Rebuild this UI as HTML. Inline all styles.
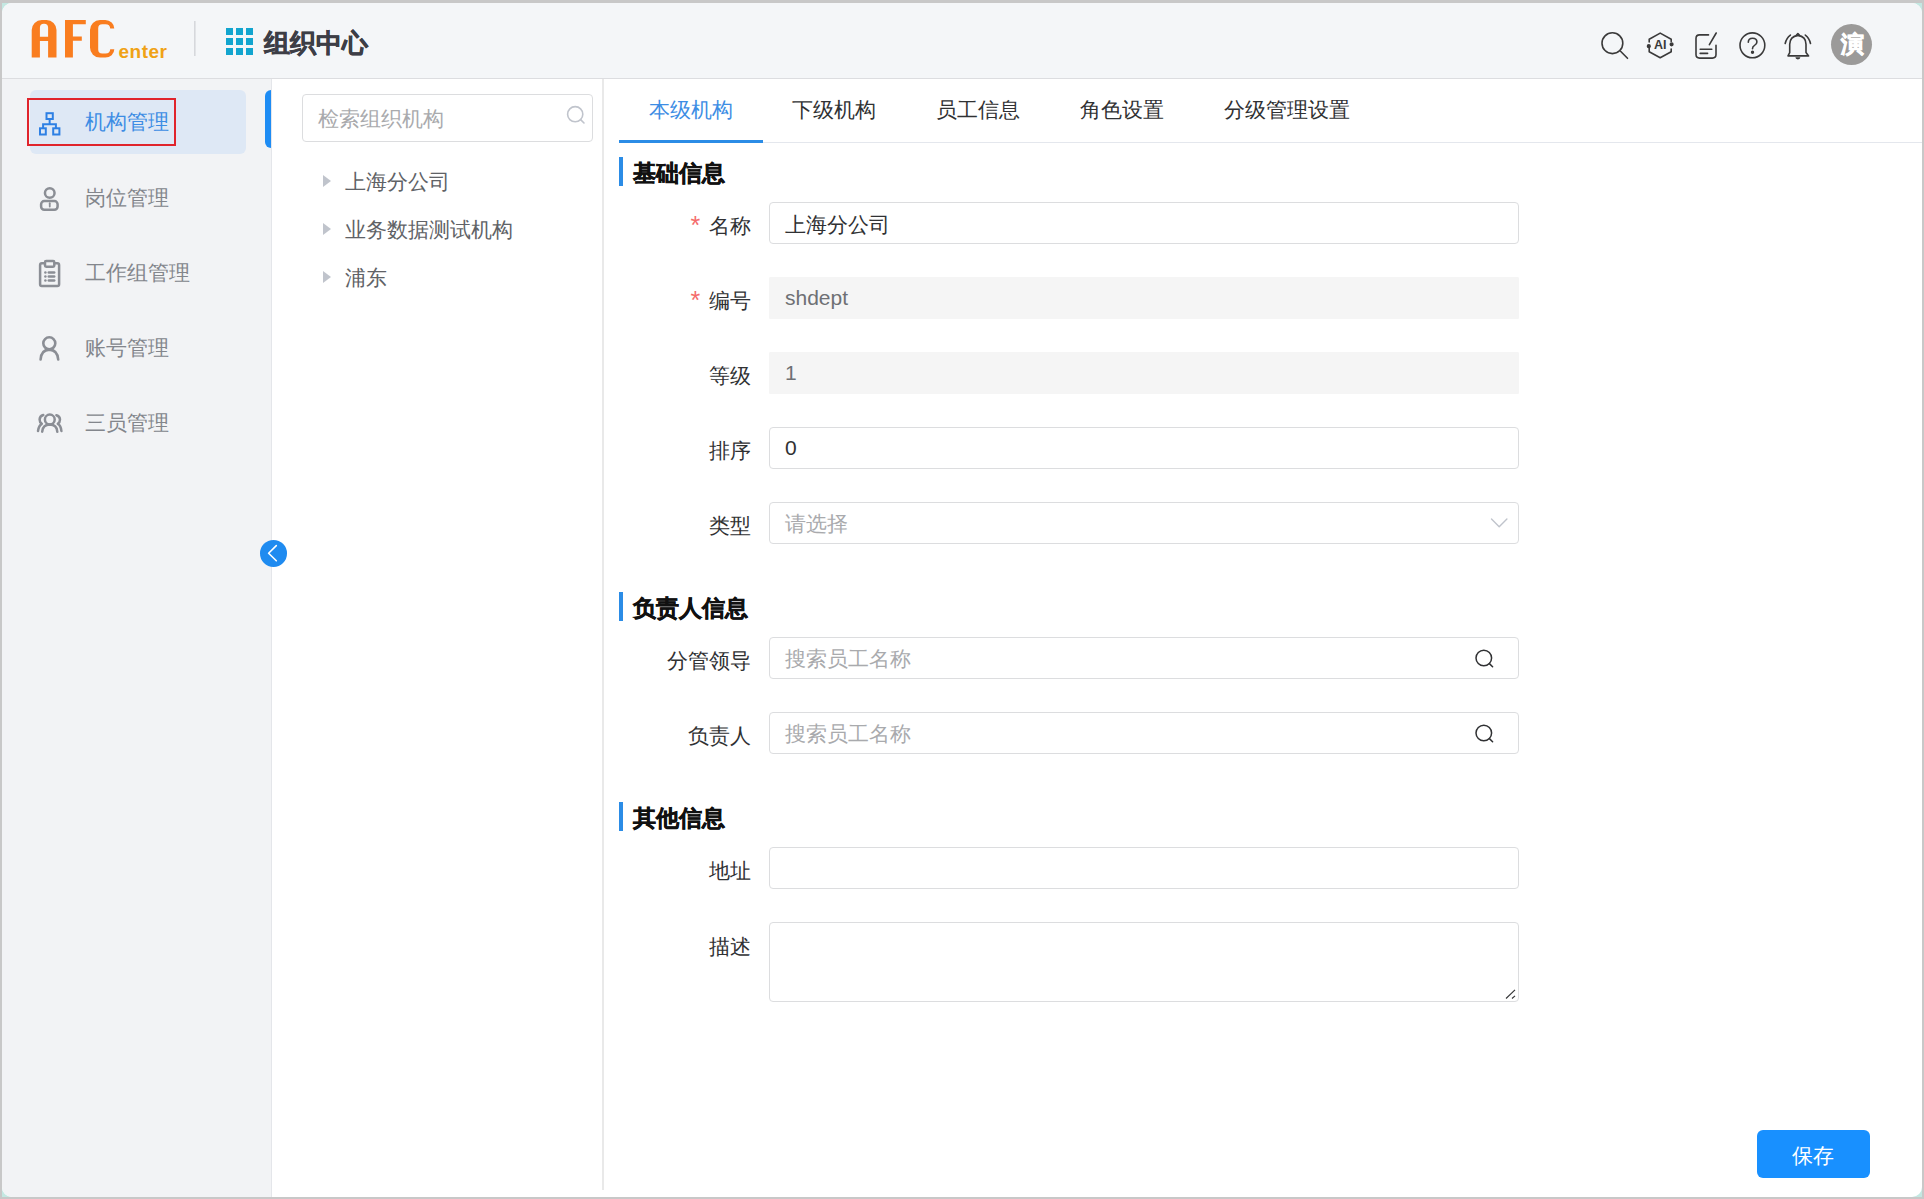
<!DOCTYPE html>
<html><head><meta charset="utf-8">
<style>
*{box-sizing:border-box;margin:0;padding:0}
html,body{width:1924px;height:1199px;overflow:hidden;background:#c8c8c8;font-family:"Liberation Sans",sans-serif}
#teal{position:absolute;left:2px;top:3px;width:1920px;height:1194px;background:#c4e8e2}
#win{position:absolute;left:2px;top:3px;width:1920px;height:1194px;border-radius:10px;overflow:hidden;background:#fff}
#hdr{position:absolute;left:0;top:0;width:1920px;height:76px;background:#f4f6f8;border-bottom:1px solid #dcdde0}
#side{position:absolute;left:0;top:76px;width:270px;height:1118px;background:#f2f3f5;border-right:1px solid #e4e6ea}
#tree{position:absolute;left:270px;top:76px;width:332px;height:1118px;background:#fff}
.t{position:absolute;white-space:nowrap;line-height:1}
.a{position:absolute}
.nav{font-size:21px;color:#83868c;margin-top:-1px}
.inp{position:absolute;left:769px;width:750px;height:41.5px;border:1px solid #dcdddf;border-radius:4px;background:#fff}
.inp.dis{background:#f5f5f5;border-color:#f5f5f5;border-radius:1px}
.lbl{font-size:21px;color:#303133;margin-top:-0.75px}
.req{font-size:25px;color:#f56c6c}
.bar{position:absolute;left:619px;width:4px;height:29px;background:#2b8ce6}
.sec{font-size:23.3px;font-weight:bold;color:#111;-webkit-text-stroke:0.45px #111;margin-top:1.2px;margin-left:1px}
.tab{font-size:21px;color:#303133;margin-top:-1px}
.val{font-size:21px;color:#303133}
.ph{font-size:21px;color:#a9aaad}
.tri{position:absolute;width:0;height:0;border-top:6.5px solid transparent;border-bottom:6.5px solid transparent;border-left:8.5px solid #c0c4cc}
</style></head><body>
<div id="teal"></div>
<div id="win">
  <div id="hdr"></div>
  <div id="side"></div>
  <div id="tree"></div>
</div>

<!-- header: logo -->
<svg class="a" style="left:0;top:0" width="260" height="78" viewBox="0 0 260 78">
  <g fill="#f97d1f" fill-rule="evenodd">
    <path d="M31.7 57.6 V30 A10 10 0 0 1 41.7 20 H46.5 A10 10 0 0 1 56.5 30 V57.6 H48.1 V40.9 H39.9 V57.6 Z M39.9 36.8 H48.1 V27.7 A4 4 0 0 0 44.1 23.7 H43.9 A4 4 0 0 0 39.9 27.7 Z"/>
    <path d="M65 57.6 V20 H85.8 V24.3 H72.9 V36.6 H81.8 V40.8 H72.9 V57.6 Z"/>
    <path d="M114.3 28.6 A9 8.6 0 0 0 105.3 20 H100 A10 10 0 0 0 90 30 V47.6 A10 10 0 0 0 100 57.6 H105.3 A9 8.4 0 0 0 114.3 49.2 H110.2 Q110 53.4 105.5 53.4 H102.2 Q98.2 53.4 98.2 49.4 V28.2 Q98.2 24.2 102.2 24.2 H105.5 Q110 24.2 110.2 28.6 Z"/>
  </g>
  <text x="118.5" y="58" font-family="Liberation Sans" font-weight="bold" font-size="19" fill="#f0a216" textLength="48.5" lengthAdjust="spacing">enter</text>
  <rect x="194" y="21" width="1.6" height="35" fill="#d6d8dc"/>
  <g fill="#12a5cf">
    <rect x="226" y="28" width="7" height="7"/><rect x="236" y="28" width="7" height="7"/><rect x="246" y="28" width="7" height="7"/>
    <rect x="226" y="38" width="7" height="7"/><rect x="236" y="38" width="7" height="7"/><rect x="246" y="38" width="7" height="7"/>
    <rect x="226" y="48" width="7" height="7"/><rect x="236" y="48" width="7" height="7"/><rect x="246" y="48" width="7" height="7"/>
  </g>
</svg>
<div class="t" style="left:264px;top:29.5px;font-size:26.4px;font-weight:bold;color:#3d3e46;-webkit-text-stroke:0.5px #3d3e46">组织中心</div>

<!-- header icons -->
<svg class="a" style="left:1590px;top:20px" width="300" height="50" viewBox="1590 20 300 50" fill="none" stroke="#3a3a3a" stroke-width="1.6" stroke-linecap="round" stroke-linejoin="round">
  <circle cx="1612.4" cy="43.2" r="10.4"/>
  <line x1="1620.3" y1="51" x2="1627.5" y2="58.3"/>
  <path d="M1649.2 42 V39.2 L1660.2 33.1 L1671.2 39.2 V41.5"/>
  <path d="M1671.2 49 V51.8 L1660.2 57.8 L1649.2 51.8 V47.5"/>
  <circle cx="1648.8" cy="46.2" r="1.3" fill="#3a3a3a"/>
  <circle cx="1671.6" cy="44.3" r="1.3" fill="#3a3a3a"/>
  <text x="1660.3" y="49.2" font-family="Liberation Sans" font-weight="bold" font-size="12.5" fill="#3a3a3a" stroke="none" text-anchor="middle">AI</text>
  <path d="M1708.5 34.9 H1699.6 Q1696 34.9 1696 38.5 V54.5 Q1696 58.1 1699.6 58.1 H1712.4 Q1716 58.1 1716 54.5 V45.3"/>
  <line x1="1709.4" y1="44.7" x2="1716.2" y2="33"/>
  <line x1="1700.2" y1="49.3" x2="1711.8" y2="49.3"/>
  <line x1="1700.2" y1="53.4" x2="1707.6" y2="53.4"/>
  <circle cx="1752.4" cy="45.3" r="12.4"/>
  <path d="M1748.3 42.3 Q1748.3 38.2 1752.6 38.2 Q1756.9 38.2 1756.9 42 Q1756.9 44.3 1754.3 45.6 Q1752.5 46.5 1752.5 48.8"/>
  <circle cx="1752.5" cy="52.2" r="0.9" fill="#3a3a3a"/>
  <path d="M1788 55.9 H1808.6 L1806 52.6 V44.2 Q1806 36.6 1797.9 35.4 Q1789.9 36.6 1789.7 44.2 V52.6 Z"/>
  <path d="M1796.3 35.3 L1797.9 33.5 L1799.5 35.3"/>
  <path d="M1795.4 57.3 H1800.4 Q1800.4 59.4 1797.9 59.4 Q1795.4 59.4 1795.4 57.3Z" fill="#3a3a3a" stroke="none"/>
  <path d="M1785.2 43.5 Q1786.3 38.2 1790.4 35.1"/>
  <path d="M1810.5 43.5 Q1809.4 38.2 1805.3 35.1"/>
</svg>
<div class="a" style="left:1831px;top:23.5px;width:41px;height:41px;border-radius:50%;background:#9b9a99"></div>
<div class="t" style="left:1841px;top:34.3px;font-size:22.5px;font-weight:bold;color:#fff;-webkit-text-stroke:0.9px #fff">演</div>

<!-- sidebar -->
<div class="a" style="left:30px;top:90px;width:216px;height:64px;border-radius:6px;background:#dee8f5"></div>
<div class="a" style="left:26.5px;top:97.5px;width:149px;height:48px;border:2px solid #e0242c"></div>
<svg class="a" style="left:30px;top:100px" width="40" height="345" viewBox="30 100 40 345" fill="none" stroke-linecap="round" stroke-linejoin="round">
  <g stroke="#2e80e4" stroke-width="2" stroke-linecap="butt" stroke-linejoin="miter">
    <rect x="46.5" y="113.2" width="6.3" height="5.8"/>
    <line x1="49.65" y1="119" x2="49.65" y2="124.2"/>
    <path d="M43.1 128 V124.2 H55.9 V128"/>
    <rect x="40" y="128.3" width="5.8" height="6.2"/>
    <rect x="53.2" y="128.3" width="6.2" height="6.2"/>
  </g>
  <g stroke="#8b8e95" stroke-width="2.5">
    <circle cx="49.75" cy="193" r="4.8"/>
    <rect x="41.1" y="201.1" width="16.5" height="8.6" rx="3.2"/>
    <line x1="49.75" y1="203.2" x2="49.75" y2="206.6" stroke-width="1.8"/>
    <path d="M44.2 263.2 H41.8 Q40.1 263.2 40.1 265 V284.2 Q40.1 286 41.8 286 H57.4 Q59.1 286 59.1 284.2 V265 Q59.1 263.2 57.4 263.2 H55"/>
    <rect x="45" y="261" width="9.3" height="5.7" rx="1.2"/>
    <line x1="48.8" y1="272.5" x2="54.2" y2="272.5"/>
    <line x1="48.8" y1="276.5" x2="54.2" y2="276.5"/>
    <line x1="48.8" y1="280.5" x2="54.2" y2="280.5"/>
    <g fill="#8b8e95" stroke="none"><circle cx="45.4" cy="272.5" r="1.25"/><circle cx="45.4" cy="276.5" r="1.25"/><circle cx="45.4" cy="280.5" r="1.25"/></g>
    <circle cx="49.3" cy="343.3" r="6" stroke-width="2.6"/>
    <path d="M40.6 359.5 Q41.2 349.9 49.3 349.6 Q57.4 349.9 58.2 359.5" stroke-width="2.6"/>
    <circle cx="49.8" cy="419.5" r="4.9"/>
    <path d="M42.2 431.7 Q42.7 424.6 49.8 424.5 Q56.9 424.6 57.3 431.7"/>
    <path d="M43.3 415 Q39.7 416 39.6 419.6 Q39.6 422.4 41.8 423.9 Q38.8 425.5 38 431"/>
    <path d="M56.4 415.2 Q59.9 416.2 60 419.6 Q60 422.4 57.8 423.9 Q60.9 425.5 61.4 431"/>
  </g>
</svg>
<div class="t nav" style="left:85px;top:112px;color:#3d8de4">机构管理</div>
<div class="t nav" style="left:85px;top:187.5px">岗位管理</div>
<div class="t nav" style="left:85px;top:262.5px">工作组管理</div>
<div class="t nav" style="left:85px;top:337.5px">账号管理</div>
<div class="t nav" style="left:85px;top:412.5px">三员管理</div>
<div class="a" style="left:265px;top:90px;width:6px;height:58px;background:#1e8cf4;border-radius:6px 0 0 6px"></div>

<!-- collapse button -->
<svg class="a" style="left:258px;top:538px" width="32" height="32" viewBox="258 538 32 32">
  <circle cx="273.5" cy="553.4" r="13.5" fill="#1f8bf0"/>
  <path d="M276.3 545.6 L268.6 553.2 L276.3 560.8" fill="none" stroke="#fff" stroke-width="1.6" stroke-linecap="round" stroke-linejoin="round"/>
</svg>

<!-- tree -->
<div class="a" style="left:602px;top:79px;width:2px;height:1111px;background:#e9e9e9"></div>
<div class="a" style="left:302px;top:94px;width:291px;height:48px;border:1px solid #dcdddf;border-radius:4px;background:#fff"></div>
<div class="t ph" style="left:318px;top:108px">检索组织机构</div>
<svg class="a" style="left:560px;top:100px" width="30" height="30" viewBox="560 100 30 30" fill="none" stroke="#c0c4cc" stroke-width="1.6" stroke-linecap="round">
  <circle cx="575.2" cy="114.2" r="7.6"/>
  <line x1="580.6" y1="119.6" x2="584" y2="123"/>
</svg>
<div class="tri" style="left:322.5px;top:175px"></div>
<div class="tri" style="left:322.5px;top:223px"></div>
<div class="tri" style="left:322.5px;top:271px"></div>
<div class="t" style="left:345px;top:171px;font-size:21px;color:#606266">上海分公司</div>
<div class="t" style="left:345px;top:219px;font-size:21px;color:#606266">业务数据测试机构</div>
<div class="t" style="left:345px;top:267px;font-size:21px;color:#606266">浦东</div>

<!-- tabs -->
<div class="a" style="left:619px;top:142px;width:1303px;height:1px;background:#e4e7ed"></div>
<div class="a" style="left:619px;top:140px;width:144px;height:3px;background:#2b8ce6"></div>
<div class="t tab" style="left:649px;top:99.5px;color:#3d8de4">本级机构</div>
<div class="t tab" style="left:792px;top:99.5px">下级机构</div>
<div class="t tab" style="left:936px;top:99.5px">员工信息</div>
<div class="t tab" style="left:1080px;top:99.5px">角色设置</div>
<div class="t tab" style="left:1224px;top:99.5px">分级管理设置</div>

<!-- section 1 -->
<div class="bar" style="top:157px"></div>
<div class="t sec" style="left:632px;top:160.5px">基础信息</div>
<div class="t req" style="left:690.5px;top:213px">*</div>
<div class="t lbl" style="left:709px;top:216px">名称</div>
<div class="inp" style="top:202px"></div>
<div class="t val" style="left:785px;top:213.5px">上海分公司</div>

<div class="t req" style="left:690.5px;top:288px">*</div>
<div class="t lbl" style="left:709px;top:291px">编号</div>
<div class="inp dis" style="top:277px"></div>
<div class="t val" style="left:785px;top:287px;color:#6e7074">shdept</div>

<div class="t lbl" style="left:709px;top:366px">等级</div>
<div class="inp dis" style="top:352px"></div>
<div class="t val" style="left:785px;top:362px;color:#6e7074">1</div>

<div class="t lbl" style="left:709px;top:441px">排序</div>
<div class="inp" style="top:427px"></div>
<div class="t val" style="left:785px;top:437px">0</div>

<div class="t lbl" style="left:709px;top:516px">类型</div>
<div class="inp" style="top:502px"></div>
<div class="t ph" style="left:785px;top:513px">请选择</div>
<svg class="a" style="left:1485px;top:512px" width="30" height="20" viewBox="1485 512 30 20">
  <path d="M1491.5 519 L1499.2 526.7 L1506.9 519" fill="none" stroke="#c0c4cc" stroke-width="1.4" stroke-linecap="round" stroke-linejoin="round"/>
</svg>

<!-- section 2 -->
<div class="bar" style="top:592px"></div>
<div class="t sec" style="left:632px;top:595.5px">负责人信息</div>
<div class="t lbl" style="left:667px;top:651px">分管领导</div>
<div class="inp" style="top:637px"></div>
<div class="t ph" style="left:785px;top:648px">搜索员工名称</div>
<div class="t lbl" style="left:688px;top:726px">负责人</div>
<div class="inp" style="top:712px"></div>
<div class="t ph" style="left:785px;top:723px">搜索员工名称</div>
<svg class="a" style="left:1470px;top:640px" width="30" height="115" viewBox="1470 640 30 115" fill="none" stroke="#303133" stroke-width="1.5" stroke-linecap="round">
  <circle cx="1483.8" cy="658" r="7.8"/>
  <line x1="1489.4" y1="663.6" x2="1492.6" y2="666.8"/>
  <circle cx="1483.8" cy="733" r="7.8"/>
  <line x1="1489.4" y1="738.6" x2="1492.6" y2="741.8"/>
</svg>

<!-- section 3 -->
<div class="bar" style="top:802px"></div>
<div class="t sec" style="left:632px;top:806px">其他信息</div>
<div class="t lbl" style="left:709px;top:861px">地址</div>
<div class="inp" style="top:847px"></div>
<div class="t lbl" style="left:709px;top:937px">描述</div>
<div class="inp" style="top:922px;height:80px"></div>
<svg class="a" style="left:1500px;top:985px" width="20" height="18" viewBox="1500 985 20 18" fill="none" stroke="#303133" stroke-width="1.1">
  <line x1="1506" y1="998.5" x2="1515" y2="989.8"/>
  <line x1="1512" y1="998.5" x2="1515" y2="995.8"/>
</svg>

<!-- save -->
<div class="a" style="left:1757px;top:1130px;width:113px;height:48px;border-radius:6px;background:#1890ff"></div>
<div class="t" style="left:1792px;top:1145px;font-size:21px;color:#fff">保存</div>
</body></html>
